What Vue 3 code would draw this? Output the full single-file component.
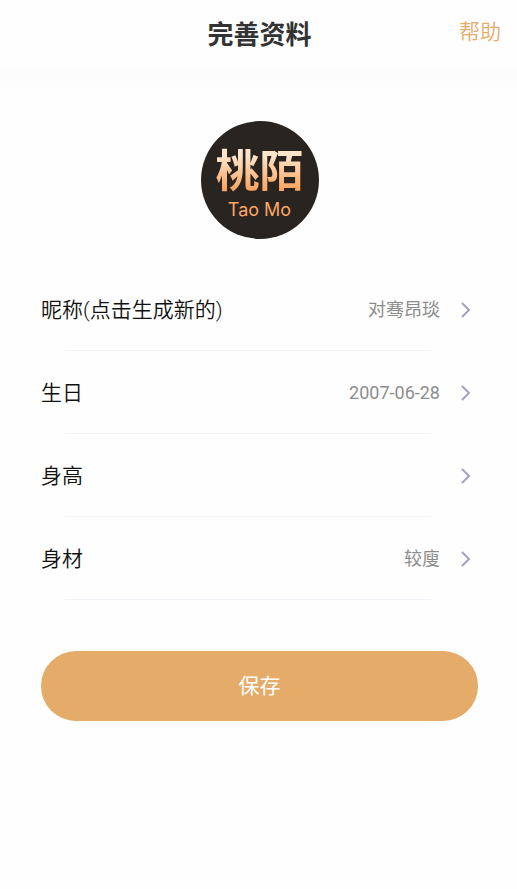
<script setup>
import { ref } from 'vue'

const rows = ref([
  { id: 'nickname', label: '昵称(点击生成新的)', value: '对骞昂琰' },
  { id: 'birthday', label: '生日', value: '2007-06-28' },
  { id: 'height', label: '身高', value: '' },
  { id: 'figure', label: '身材', value: '较廋' },
])
</script>

<template>
  <div class="page">
    <header class="bar">
      <h1 class="title">完善资料</h1>
      <a class="help" href="#help">帮助</a>
    </header>

    <main class="content">
      <div class="avatar">
        <span class="brand">桃陌</span>
        <span class="brand-latin">Tao Mo</span>
      </div>

      <ul class="rows">
        <li v-for="row in rows" :key="row.id" class="item">
          <button type="button" class="row">
            <span class="label">{{ row.label }}</span>
            <span class="value">{{ row.value }}</span>
            <svg class="chevron" viewBox="0 0 10 16" aria-hidden="true">
              <path d="M1 1 L8 8 L1 15" />
            </svg>
          </button>
        </li>
      </ul>

      <button type="button" class="save">保存</button>
    </main>
  </div>
</template>

<style>
body {
  background: #fefefe;
}
</style>

<style scoped>
.page {
  font-family: Roboto, 'Noto Sans CJK SC', sans-serif;
  color: #111;
}

.bar {
  display: grid;
  grid-template-columns: 1fr auto 1fr;
  align-items: center;
  height: 68px;
  padding: 2px 16px 0 18px;
  box-sizing: border-box;
  background: #fefefe;
  box-shadow: 0 10px 0 #fcfcfc, 0 20px 0 #fdfdfd;
}

.title {
  grid-column: 2;
  margin: 0;
  font-size: 26px;
  line-height: 36px;
  font-weight: 700;
  color: #333;
}

.help {
  justify-self: end;
  padding-bottom: 6px;
  font-size: 21px;
  line-height: 28px;
  font-weight: 350;
  color: #e5ac69;
  text-decoration: none;
}

.content {
  display: flex;
  flex-direction: column;
  padding: 53px 39px 40px 41px;
}

.avatar {
  display: flex;
  flex-direction: column;
  align-items: center;
  align-self: center;
  width: 118px;
  height: 118px;
  padding-top: 27px;
  box-sizing: border-box;
  border-radius: 50%;
  background: #2a2421;
}

.brand {
  font-size: 44px;
  line-height: 48px;
  font-weight: 700;
  color: transparent;
  background: linear-gradient(#ffe6cb 15%, #fba561 85%);
  background-clip: text;
  -webkit-background-clip: text;
}

.brand-latin {
  font-family: Inter, sans-serif;
  font-size: 18px;
  line-height: 28px;
  color: #fba765;
}

.rows {
  margin: 29px 0 0;
  padding: 0;
  list-style: none;
}

.item::after {
  content: '';
  display: block;
  height: 1px;
  margin: 0 47px 0 24px;
  background: #f1f3f8;
}

.row {
  display: flex;
  align-items: center;
  width: 100%;
  height: 82px;
  padding: 2px 7px 0 0;
  border: 0;
  background: none;
  font-family: inherit;
  color: inherit;
  text-align: left;
}

.label {
  flex: 1;
  font-size: 21px;
  line-height: 28px;
  font-weight: 350;
}

.value {
  font-size: 18px;
  line-height: 28px;
  color: #8c8c8c;
}

.chevron {
  width: 10px;
  height: 16px;
  margin-left: 21px;
  fill: none;
  stroke: #a3a1c0;
  stroke-width: 2;
}

.save {
  height: 70px;
  margin-top: 51px;
  padding: 0;
  border: 0;
  border-radius: 35px;
  background: #e5ac69;
  color: #fff;
  font-family: inherit;
  font-size: 21px;
  line-height: 28px;
}
</style>
